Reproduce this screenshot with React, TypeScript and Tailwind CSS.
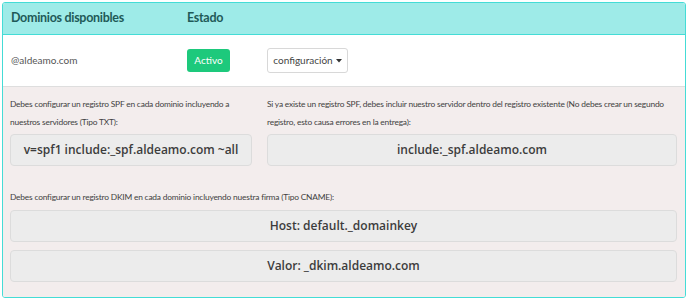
import React from "react";

export default function App() {
  const label = "text-[8.4px] tracking-[-0.2px] leading-[18px] text-[#3f3f3f] whitespace-nowrap";
  const box =
    "h-[32px] flex items-center justify-center rounded-[4px] border border-[#dcdcdc] bg-[#ececec] text-[12px] font-semibold text-[#3c3c3c]";
  const lato = { fontFamily: "Lato, sans-serif" };
  const os = { fontFamily: "'Open Sans', sans-serif" };
  return (
    <div className="w-[688px] h-[300px] bg-white pt-[2px] pl-[2px]" style={lato}>
      <div className="w-[684px] h-[296px] border border-[#44dcd6] rounded-[3px] flex flex-col overflow-hidden">
        <div className="h-[32px] bg-[#9eebe8] border-b border-[#44dcd6] flex items-center text-[12.5px] tracking-[-0.3px] font-bold text-[#1f5a58]">
          <div className="w-[176px] pl-[8px]">Dominios disponibles</div>
          <div className="pl-[8px]">Estado</div>
        </div>
        <div className="h-[52px] bg-white border-b border-[#dedede] flex items-center">
          <div className="w-[176px] pl-[8px] text-[10px] text-[#555]">@aldeamo.com</div>
          <div className="w-[88px] pl-[8px]">
            <div className="w-[43px] h-[23px] rounded-[3px] bg-[#1dc97c] text-white text-[10px] flex items-center justify-center">Activo</div>
          </div>
          <div className="w-[81px] h-[25px] rounded-[3px] border border-[#d8d8d8] bg-white text-[10px] text-[#444] flex items-center justify-center gap-[3px]">
            configuración
            <svg width="6" height="4" viewBox="0 0 6 4"><path d="M0 0h6L3 3.5z" fill="#333" /></svg>
          </div>
        </div>
        <div className="flex-1 bg-[#f3eded] px-[7px] pt-[8px]">
          <div className="flex gap-[15px]">
            <div className="w-[242px]">
              <div className={label}>Debes configurar un registro SPF en cada dominio incluyendo a<br />nuestros servidores (Tipo TXT):</div>
              <div className={box + " mt-[3px]"} style={os}>v=spf1 include:_spf.aldeamo.com ~all</div>
            </div>
            <div className="w-[410px]">
              <div className={label}>Si ya existe un registro SPF, debes incluir nuestro servidor dentro del registro existente (No debes crear un segundo<br />registro, esto causa errores en la entrega):</div>
              <div className={box + " mt-[3px]"} style={os}>include:_spf.aldeamo.com</div>
            </div>
          </div>
          <div className={label + " mt-[22px]"}>Debes configurar un registro DKIM en cada dominio incluyendo nuestra firma (Tipo CNAME):</div>
          <div className={box + " mt-[4px] w-[667px]"} style={os}>Host: default._domainkey</div>
          <div className={box + " mt-[8px] w-[667px]"} style={os}>Valor: _dkim.aldeamo.com</div>
        </div>
      </div>
    </div>
  );
}
